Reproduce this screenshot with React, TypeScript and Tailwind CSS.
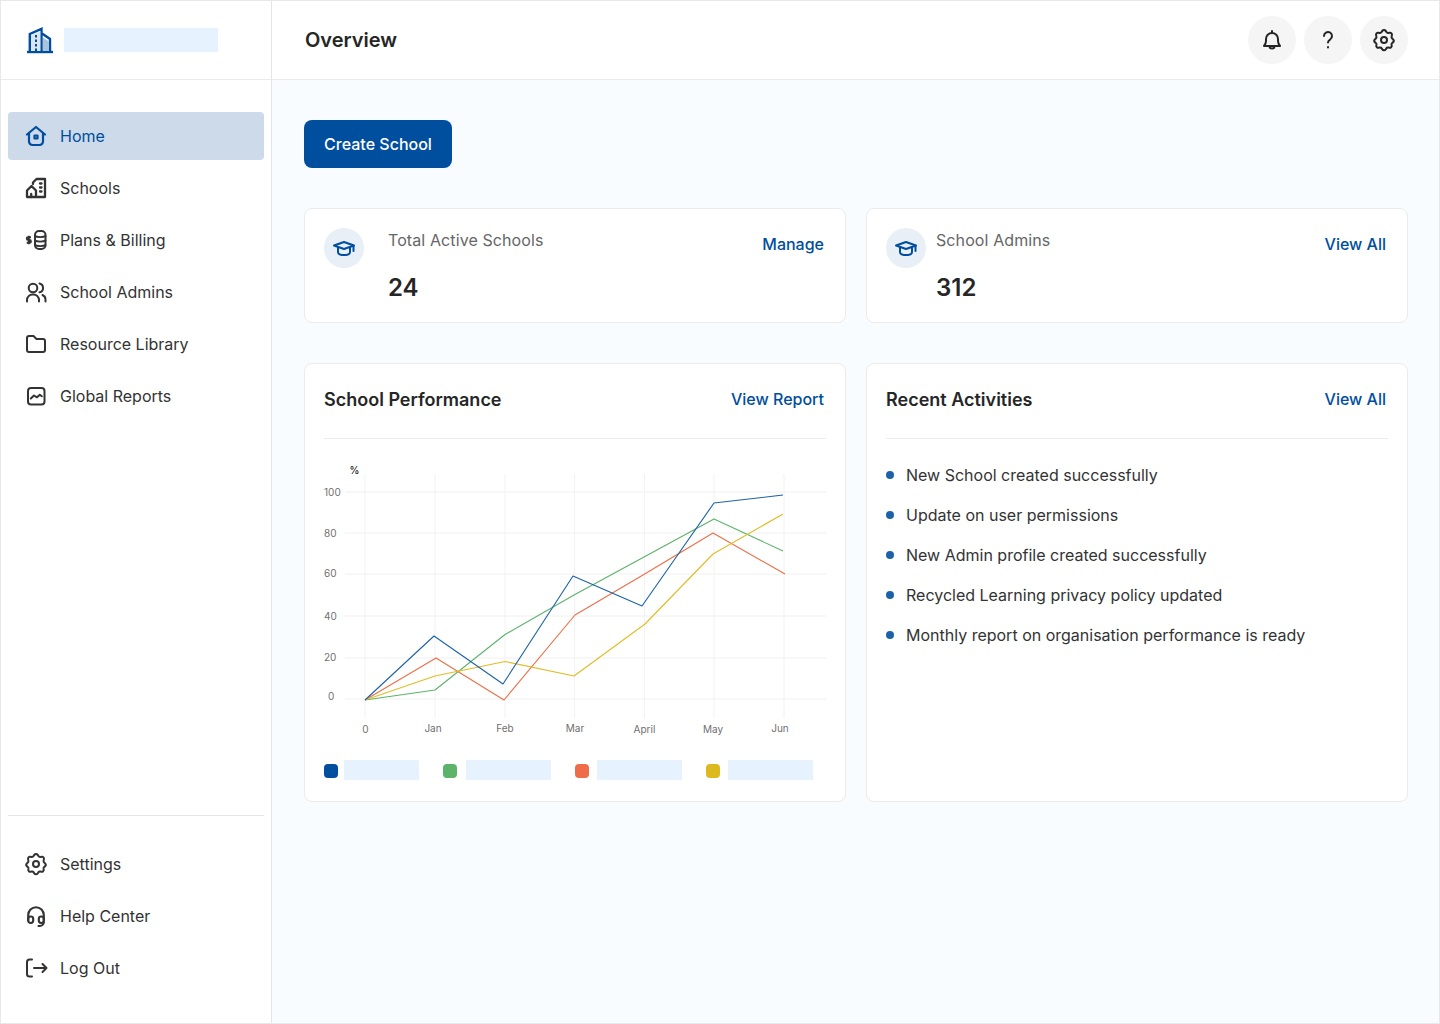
import React from 'react';

const Icon: React.FC<{ children: React.ReactNode; className?: string; strokeWidth?: number }> = ({ children, className = 'w-6 h-6', strokeWidth = 2 }) => (
  <svg viewBox="0 0 24 24" fill="none" stroke="currentColor" strokeWidth={strokeWidth} strokeLinecap="round" strokeLinejoin="round" className={className}>
    {children}
  </svg>
);

const HomeIcon = () => (
  <Icon strokeWidth={2.200}>
    <path d="M3 10.500 12 3l9 7.500" />
    <path d="M5 9v8.500A3.500 3.500 0 0 0 8.500 21h7a3.500 3.500 0 0 0 3.500-3.500V9" />
    <rect x="10.500" y="11.500" width="3" height="3" />
  </Icon>
);

const SchoolsIcon = () => (
  <Icon strokeWidth={2.300}>
    <path d="M9 8V6.500L12.500 3H21v18H3v-6.500L7.500 10l4.500 4.500V21" />
    <path d="M7.200 21v-3" />
    <path d="M16 7.500h1.500M16 11.500h1.500M16 15.500h1.500" />
  </Icon>
);

const BillingIcon = () => (
  <Icon>
    <rect x="11" y="3" width="10.500" height="18" rx="4" />
    <path d="M11 8c1.500 1.400 9 1.400 10.500 0M11 12.500c1.500 1.400 9 1.400 10.500 0M11 17c1.500 1.400 9 1.400 10.500 0" strokeWidth={1.800} />
    <path d="M7 9.200H4.200a1.400 1.400 0 0 0 0 2.800h1.300a1.400 1.400 0 0 1 0 2.800H2.700M4.800 7.800v8.400" strokeWidth={2} strokeLinecap="butt" />
  </Icon>
);

const UsersIcon = () => (
  <Icon>
    <circle cx="9" cy="8" r="4.300" />
    <path d="M3 21.500v-1.500A5.500 5.500 0 0 1 8.500 14.500h1a5.500 5.500 0 0 1 5.500 5.500v1.500" />
    <path d="M15.500 3.500a4.500 4.500 0 0 1 0 8.800" />
    <path d="M18.500 15a5 5 0 0 1 3 4.500v2" />
  </Icon>
);

const FolderIcon = () => (
  <Icon>
    <path d="M3 6a2 2 0 0 1 2-2h4.500l3 3H19a2 2 0 0 1 2 2v9a2 2 0 0 1-2 2H5a2 2 0 0 1-2-2z" />
  </Icon>
);

const ReportsIcon = () => (
  <Icon>
    <rect x="4" y="4" width="16.500" height="16.500" rx="3" />
    <path d="M6.800 14.500 10 11.500l3 1.800 2.800-2.500 2 1.500" />
  </Icon>
);

const GearIcon = () => (
  <Icon>
    <path d="M10.300 3.500a2 2 0 0 1 3.400 0l.7 1.100a2 2 0 0 0 2 .9l1.300-.2a2 2 0 0 1 2.200 2.500l-.3 1.300a2 2 0 0 0 .6 2l.9.900a2 2 0 0 1 0 2.800l-.9.900a2 2 0 0 0-.6 2l.1.300a2 2 0 0 1-2.400 2.300l-1-.2a2 2 0 0 0-2 .9l-.6 1a2 2 0 0 1-3.400 0l-.6-1a2 2 0 0 0-2-.9l-1 .2a2 2 0 0 1-2.400-2.300l.1-.3a2 2 0 0 0-.6-2l-.9-.9a2 2 0 0 1 0-2.800l.9-.9a2 2 0 0 0 .6-2l-.3-1.300a2 2 0 0 1 2.200-2.500l1.300.2a2 2 0 0 0 2-.9z" transform="translate(0 -.6)" />
    <circle cx="12" cy="12" r="3" />
  </Icon>
);

const HeadsetIcon = () => (
  <Icon strokeWidth={2.100}>
    <path d="M4.200 16.500V11a7.800 7.800 0 0 1 15.600 0v5.500" />
    <rect x="4.200" y="12.500" width="5" height="6.500" rx="2.400" />
    <rect x="14.800" y="12.500" width="5" height="6.500" rx="2.400" />
    <path d="M19.800 18a4 4 0 0 1-4 4H14.500" />
  </Icon>
);

const LogOutIcon = () => (
  <Icon>
    <path d="M8 3.500H5.500A2.500 2.500 0 0 0 3 6v12a2.500 2.500 0 0 0 2.500 2.500H8" />
    <path d="M10 12h12.500M18.500 8l4 4-4 4" />
  </Icon>
);

const BellIcon = () => (
  <Icon>
    <path d="M4 18c1.300-1.500 2-2.800 2-5v-2a6 6 0 0 1 12 0v2c0 2.200.7 3.500 2 5z" />
    <path d="M12 3v2M9.500 18a2.500 2.500 0 0 0 5 0" />
  </Icon>
);

const CapIcon = () => (
  <Icon className="w-6 h-6" strokeWidth={2}>
    <path d="M2 9.500 12 6l10 3.500-10 3.500z" />
    <path d="M6 11.500V16c0 1.800 2.800 3 6 3s6-1.200 6-3v-4.500" />
    <path d="M21.500 10v5" />
  </Icon>
);

const mainNav = [
  { label: 'Home', icon: <HomeIcon />, active: true },
  { label: 'Schools', icon: <SchoolsIcon /> },
  { label: 'Plans & Billing', icon: <BillingIcon /> },
  { label: 'School Admins', icon: <UsersIcon /> },
  { label: 'Resource Library', icon: <FolderIcon /> },
  { label: 'Global Reports', icon: <ReportsIcon /> },
];

const footerNav = [
  { label: 'Settings', icon: <GearIcon /> },
  { label: 'Help Center', icon: <HeadsetIcon /> },
  { label: 'Log Out', icon: <LogOutIcon /> },
];

const activities = [
  'New School created successfully',
  'Update on user permissions',
  'New Admin profile created successfully',
  'Recycled Learning privacy policy updated',
  'Monthly report on organisation performance is ready',
];

const NavItem: React.FC<{ label: string; icon: React.ReactNode; active?: boolean }> = ({ label, icon, active }) => (
  <a className={`flex items-center gap-3 h-12 px-4 rounded text-base ${active ? 'bg-[#ccdaea] text-[#004e9e]' : 'text-[#333333]'}`}>
    {icon}
    <span>{label}</span>
  </a>
);

const StatCard: React.FC<{ title: string; value: string; link: string; gap: string }> = ({ title, value, link, gap }) => (
  <div className="flex-1 h-[115px] bg-white border border-[#ebebeb] rounded-lg pl-[19px] pr-[21px] pt-[19px] flex">
    <div className={`w-10 h-10 rounded-full bg-[#e9eff6] text-[#004e9e] flex items-center justify-center shrink-0 ${gap}`}>
      <CapIcon />
    </div>
    <div className="flex-1">
      <p className="text-base leading-6 tracking-[0.1px] text-[#666666]">{title}</p>
      <p className="text-2xl font-semibold leading-8 text-[#262626] mt-5">{value}</p>
    </div>
    <a className="text-base font-medium leading-6 text-[#004e9e] mt-1">{link}</a>
  </div>
);

const gridY = [492, 533, 574, 616, 658, 699];
const gridX = [365, 435, 505, 574.500, 644.500, 714, 784];
const yLabels = [
  { t: '100', x: 324, y: 495.500 },
  { t: '80', x: 324, y: 537 },
  { t: '60', x: 324, y: 577 },
  { t: '40', x: 324, y: 620 },
  { t: '20', x: 324, y: 661 },
  { t: '0', x: 328, y: 700 },
];
const xLabels = [
  { t: '0', x: 365.500, y: 733 },
  { t: 'Jan', x: 433, y: 732 },
  { t: 'Feb', x: 505, y: 732 },
  { t: 'Mar', x: 575, y: 732 },
  { t: 'April', x: 644.500, y: 733 },
  { t: 'May', x: 713, y: 733 },
  { t: 'Jun', x: 780, y: 732 },
];
const series = [
  { color: '#5cb36a', points: '365,700 435,690 505,634.500 574,595 644,557 714,519 783,551' },
  { color: '#ee6c47', points: '365,700 436,658 504,700 575,615 643,575 713,533 785,574' },
  { color: '#e0bc25', points: '365,700 435,676 505,661.500 574,676 645,624 713,554 783,514' },
  { color: '#1c62a8', points: '365,700 434,636 503,684 573,576 642,606 714,503 783,495' },
];

const Chart = () => (
  <svg viewBox="324 460 502 280" className="w-[502px] h-[280px]">
    {gridY.map((y) => (
      <line key={y} x1="345" x2="826" y1={y} y2={y} stroke="#f0f0f0" strokeWidth="1" />
    ))}
    {gridX.map((x) => (
      <line key={x} x1={x} x2={x} y1="474" y2="718" stroke="#f2f2f2" strokeWidth="1" />
    ))}
    {series.map((s) => (
      <polyline key={s.color} points={s.points} fill="none" stroke={s.color} strokeWidth="1.100" strokeLinejoin="round" />
    ))}
    <text x="349.500" y="474" fontSize="10" fontWeight="500" fill="#262626">%</text>
    {yLabels.map((l) => (
      <text key={l.t} x={l.x} y={l.y} fontSize="10" fill="#707070">{l.t}</text>
    ))}
    {xLabels.map((l) => (
      <text key={l.t} x={l.x} y={l.y} fontSize="10" fill="#707070" textAnchor="middle">{l.t}</text>
    ))}
  </svg>
);

const App: React.FC = () => {
  return (
    <div className="flex h-[1024px] w-[1440px] font-['Inter',sans-serif] bg-[#f8fcff] overflow-hidden border border-[#e8e8e8]">
      <aside className="w-[271px] shrink-0 bg-white border-r border-[#e5e5e5] flex flex-col">
        <div className="h-[79px] border-b border-[#ebebeb] flex items-center pl-[25px]">
          <svg viewBox="0 0 28 28" className="w-7 h-7 text-[#004e9e]" fill="none" stroke="currentColor" strokeWidth="2.400">
            <path d="M1 26h26" />
            <path d="M3.800 26V8L15.500 2.800V26" />
            <path d="M16 7.500l8 5.500V26" />
            <path d="M17 11.500l6 4V25h-6z" fill="#a9c4df" stroke="none" />
            <path d="M5 9.500l9.300-4.500V25H5z" fill="#dbe6f1" stroke="none" />
            <path d="M10 9v2.500M10 13.500V16M10 18v2.500M10 22.500V25" strokeWidth="2" />
          </svg>
          <div className="w-[154px] h-6 bg-[#e6f3fe] ml-[10px]" />
        </div>
        <nav className="flex flex-col gap-1 px-[7px] pt-8 flex-1">
          {mainNav.map((item) => (
            <NavItem key={item.label} {...item} />
          ))}
        </nav>
        <div className="mx-[7px] border-t border-[#e5e5e5] pt-6 pb-[31px] flex flex-col gap-1">
          {footerNav.map((item) => (
            <NavItem key={item.label} {...item} />
          ))}
        </div>
      </aside>

      <div className="flex-1 flex flex-col min-w-0">
        <header className="h-[79px] bg-white border-b border-[#ebebeb] flex items-center justify-between pl-[33px] pr-[31px] shrink-0">
          <h1 className="text-xl font-semibold text-[#262626]">Overview</h1>
          <div className="flex gap-2 text-[#262626]">
            <button className="w-12 h-12 rounded-full bg-[#f5f5f5] flex items-center justify-center"><BellIcon /></button>
            <button className="w-12 h-12 rounded-full bg-[#f5f5f5] flex items-center justify-center">
              <Icon>
                <path d="M8 8a4 4 0 1 1 6.300 3.300c-1.500 1-2.300 1.800-2.300 3.200" />
                <path d="M12 19v.5" />
              </Icon>
            </button>
            <button className="w-12 h-12 rounded-full bg-[#f5f5f5] flex items-center justify-center"><GearIcon /></button>
          </div>
        </header>

        <main className="flex-1 pl-8 pr-[31px] pt-10">
          <button className="w-[148px] h-12 rounded-lg bg-[#004e9e] text-white text-base font-medium">Create School</button>

          <div className="flex gap-5 mt-10">
            <StatCard title="Total Active Schools" value="24" link="Manage" gap="mr-6" />
            <StatCard title="School Admins" value="312" link="View All" gap="mr-2.5" />
          </div>

          <div className="flex gap-5 mt-10">
            <section className="flex-1 h-[439px] bg-white border border-[#ebebeb] rounded-lg px-[19px] pt-[15px]">
              <div className="flex items-center justify-between h-10 pr-[2px]">
                <h2 className="text-lg font-semibold text-[#262626] mt-[1px]">School Performance</h2>
                <a className="text-base font-medium text-[#004e9e]">View Report</a>
              </div>
              <div className="border-t border-[#ebebeb] mt-[19px] w-[502px] mb-[21px]" />
              <Chart />
              <div className="flex items-start mt-5">
                <span className="w-[14px] h-[14px] rounded mt-1 bg-[#004e9e]" />
                <span className="w-[75px] h-5 bg-[#e6f3fe] ml-[6px]" />
                <span className="w-[14px] h-[14px] rounded mt-1 bg-[#5cb36a] ml-6" />
                <span className="w-[85px] h-5 bg-[#e6f3fe] ml-[9px]" />
                <span className="w-[14px] h-[14px] rounded mt-1 bg-[#ee6c47] ml-6" />
                <span className="w-[85px] h-5 bg-[#e6f3fe] ml-2" />
                <span className="w-[14px] h-[14px] rounded mt-1 bg-[#dcba1f] ml-6" />
                <span className="w-[85px] h-5 bg-[#e6f3fe] ml-2" />
              </div>
            </section>

            <section className="flex-1 h-[439px] bg-white border border-[#ebebeb] rounded-lg px-[19px] pt-[15px]">
              <div className="flex items-center justify-between h-10 pr-[2px]">
                <h2 className="text-lg font-semibold text-[#262626] mt-[1px]">Recent Activities</h2>
                <a className="text-base font-medium text-[#004e9e]">View All</a>
              </div>
              <div className="border-t border-[#ebebeb] mt-[19px] w-[502px]" />
              <ul className="flex flex-col gap-4 mt-6">
                {activities.map((a) => (
                  <li key={a} className="flex items-center gap-3 text-base leading-6 text-[#333333]">
                    <span className="w-2 h-2 rounded-full bg-[#1c62a8]" />
                    {a}
                  </li>
                ))}
              </ul>
            </section>
          </div>
        </main>
      </div>
    </div>
  );
};

export default App;
